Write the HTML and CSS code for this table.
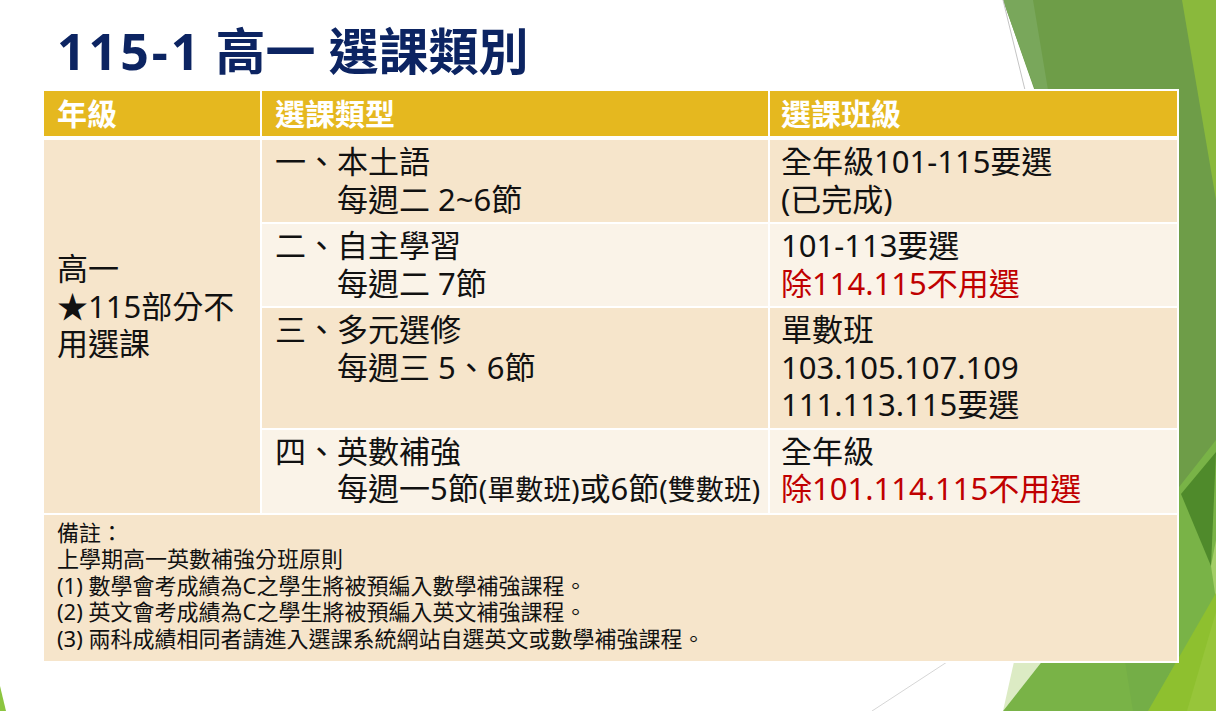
FILE: index.html
```html
<!DOCTYPE html>
<html lang="zh-Hant">
<head>
<meta charset="utf-8">
<title>115-1 高一 選課類別</title>
<link rel="stylesheet" href="styles.css">
</head>
<body>
<div class="page">
  <svg class="deco" viewBox="0 0 1216 711" width="1216" height="711" aria-hidden="true">
    <polygon points="1003,0 1216,0 1216,600 1178,500" fill="#6E9D48"/>
    <polygon points="1003,0 1033,0 1048,90 1035,90" fill="#79A75B"/>
    <polygon points="1182,0 1216,0 1216,200" fill="#8AB93C"/>
    <line x1="1003" y1="0" x2="1025" y2="90" stroke="#C4C4C4" stroke-width="1"/>
    <polygon points="1003,711 1030,590 1098,590" fill="#DCEBC4"/>
    <polygon points="1003,711 1216,440 1216,711" fill="#79B347"/>
    <polygon points="1181,494 1216,452 1211,566" fill="#4F8A2B"/>
    <polygon points="1211,566 1216,540 1216,600" fill="#A3CE67"/>
    <polygon points="1124,655 1180,655 1148,711 1133,711" fill="#74AE47"/>
    <polygon points="1148,711 1216,593 1216,711" fill="#8EC02F"/>
    <polygon points="1187,711 1216,612 1216,711" fill="#97C53A"/>
    <line x1="947" y1="662" x2="872" y2="711" stroke="#D6D6D6" stroke-width="1"/>
    <polygon points="0,686 6,711 0,711" fill="#8CC540"/>
  </svg>

  <h1 class="title"><span class="num">115-1</span> 高一 選課類別</h1>

  <div class="grid">
    <div class="cell head c1">年級</div>
    <div class="cell head c2">選課類型</div>
    <div class="cell head c3">選課班級</div>

    <div class="cell grade">
      <div>高一</div>
      <div>★115部分不</div>
      <div>用選課</div>
    </div>

    <div class="cell dark c2">
      <div class="line">一、本土語</div>
      <div class="line indent">每週二 2~6節</div>
    </div>
    <div class="cell dark c3">
      <div>全年級101-115要選</div>
      <div>(已完成)</div>
    </div>

    <div class="cell light c2">
      <div class="line">二、自主學習</div>
      <div class="line indent">每週二 7節</div>
    </div>
    <div class="cell light c3">
      <div>101-113要選</div>
      <div class="red">除114.115不用選</div>
    </div>

    <div class="cell dark c2">
      <div class="line">三、多元選修</div>
      <div class="line indent">每週三 5、6節</div>
    </div>
    <div class="cell dark c3">
      <div>單數班</div>
      <div>103.105.107.109</div>
      <div>111.113.115要選</div>
    </div>

    <div class="cell light c2">
      <div class="line">四、英數補強</div>
      <div class="line indent">每週一5節<span class="small">(單數班)</span>或6節<span class="small">(雙數班)</span></div>
    </div>
    <div class="cell light c3">
      <div>全年級</div>
      <div class="red">除101.114.115不用選</div>
    </div>

    <div class="cell dark remark">
      <div>備註：</div>
      <div>上學期高一英數補強分班原則</div>
      <div>(1) 數學會考成績為C之學生將被預編入數學補強課程。</div>
      <div>(2) 英文會考成績為C之學生將被預編入英文補強課程。</div>
      <div>(3) 兩科成績相同者請進入選課系統網站自選英文或數學補強課程。</div>
    </div>
  </div>
</div>
</body>
</html>
```

FILE: styles.css
```css
* {
  box-sizing: border-box;
}

html, body {
  margin: 0;
  padding: 0;
  background: #ffffff;
}

body {
  font-family: "Noto Sans", "Noto Sans CJK TC", sans-serif;
  color: #111111;
  overflow: hidden;
}

.page {
  position: relative;
  width: 1216px;
  height: 711px;
  overflow: hidden;
  padding-left: 44px;
}

.deco {
  position: absolute;
  left: 0;
  top: 0;
  z-index: 0;
}

.title {
  position: relative;
  z-index: 1;
  margin: 0 0 0 13px;
  padding-top: 21px;
  font-size: 50px;
  line-height: 60px;
  font-weight: 700;
  color: #0C2462;
  white-space: nowrap;
}

.title .num {
  letter-spacing: 3px;
}

.grid {
  position: relative;
  z-index: 1;
  margin-top: 8px;
  width: 1135px;
  display: grid;
  grid-template-columns: 218px 508px 409px;
  border-top: 2px solid #ffffff;
  background: #ffffff;
}

.cell {
  border-right: 2px solid #ffffff;
  border-bottom: 2px solid #ffffff;
  font-size: 31px;
  line-height: 37.5px;
  padding: 3px 8px 4px 13px;
}

.cell.c3 {
  padding-left: 11px;
}

.head {
  background: #E5B81F;
  color: #ffffff;
  font-weight: 700;
  font-size: 30px;
  line-height: 37px;
  padding-top: 4px;
  padding-bottom: 4px;
  border-bottom-width: 4px;
}

.dark {
  background: #F6E5CB;
}

.light {
  background: #FAF3E8;
}

.grade {
  grid-column: 1;
  grid-row: 2 / span 4;
  background: #F6E5CB;
  display: flex;
  flex-direction: column;
  justify-content: center;
  padding-bottom: 43px;
  white-space: nowrap;
}

.line {
  white-space: nowrap;
}

.indent {
  padding-left: 62px;
}

.small {
  font-size: 28px;
}

.red {
  color: #C00000;
}

.remark {
  grid-column: 1 / -1;
  font-size: 22px;
  line-height: 26.5px;
  padding-top: 4px;
  padding-bottom: 10px;
  white-space: nowrap;
}
```
